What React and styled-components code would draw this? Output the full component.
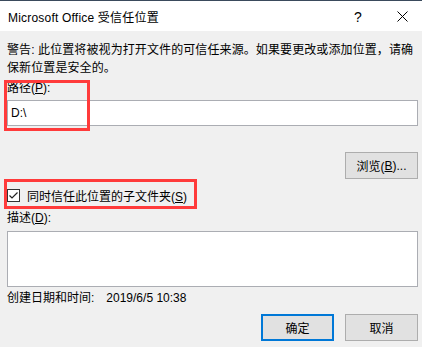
import React from "react";
import styled, {createGlobalStyle} from "styled-components";

const GlobalStyle = createGlobalStyle`
html, body {
    margin: 0;
    padding: 0;
    background: #f0f0f0;
}
body {
    font-family: "Liberation Sans", "Noto Sans CJK SC", sans-serif;
    font-size: 12px;
    color: #000;
}
`;

const Dialog = styled.div`
width: 422px;
height: 347px;
position: relative;
background: #f0f0f0;
overflow: hidden;
`;

const TitleBar = styled.div`
height: 30px;
border-top: 1px solid #3a4a5c;
background: #fff;
display: flex;
align-items: center;
padding-left: 8px;
font-size: 12px;
`;

const TitleText = styled.div`
flex: 1;
padding-top: 1px;
letter-spacing: 0.2px;
`;

const HelpMark = styled.div`
width: 30px;
margin-right: 11px;
text-align: center;
font-size: 14px;
line-height: 14px;
padding-top: 1px;
font-family: "Liberation Sans", sans-serif;
`;

const CloseBox = styled.div`
width: 36px;
display: flex;
justify-content: center;
padding-right: 2px;
`;

const Body = styled.div`
padding: 10px 4px 0 7px;
display: flex;
flex-direction: column;
`;

const Line = styled.div`
line-height: 18px;
white-space: nowrap;
margin-top: ${p => p.$top || 0}px;
letter-spacing: ${p => p.$spread ? "0.1px" : "normal"};
`;

const Key = styled.span`
text-decoration: underline;
text-underline-offset: 1px;
`;

const Field = styled.div`
height: ${p => p.$height}px;
margin-top: ${p => p.$top}px;
background: #fff;
border: 1px solid #abadb3;
box-sizing: border-box;
display: flex;
align-items: center;
padding-left: 3px;
`;

const ButtonRow = styled.div`
display: flex;
justify-content: flex-end;
gap: 11px;
margin-top: ${p => p.$top}px;
`;

const Button = styled.div`
width: 73px;
height: 27px;
box-sizing: border-box;
background: #e1e1e1;
border: ${p => p.$primary ? "2px solid #0078d7" : "1px solid #adadad"};
display: flex;
align-items: center;
justify-content: center;
`;

const CheckRow = styled.div`
display: flex;
align-items: center;
gap: 7px;
height: 18px;
margin-top: 7px;
`;

const DateRow = styled.div`
display: flex;
gap: 12px;
line-height: 18px;
margin-top: 2px;
`;

const Highlight = styled.div`
position: absolute;
left: ${p => p.$x}px;
top: ${p => p.$y}px;
width: ${p => p.$w}px;
height: ${p => p.$h}px;
border: 3px solid #ff3b3b;
box-sizing: border-box;
pointer-events: none;
`;

const App = () => {
    return (
        <Dialog>
            <GlobalStyle/>
            <TitleBar>
                <TitleText>Microsoft Office 受信任位置</TitleText>
                <HelpMark>?</HelpMark>
                <CloseBox>
                    <svg width="11" height="11" viewBox="0 0 11 11">
                        <path d="M0.5 0.5 L10.5 10.5 M10.5 0.5 L0.5 10.5" stroke="#000" strokeWidth="1" fill="none"/>
                    </svg>
                </CloseBox>
            </TitleBar>
            <Body>
                <Line $spread>警告: 此位置将被视为打开文件的可信任来源。如果要更改或添加位置，请确</Line>
                <Line $spread>保新位置是安全的。</Line>
                <Line $top={2}>路径(<Key>P</Key>):</Line>
                <Field $height={26} $top={3}>D:\</Field>
                <ButtonRow $top={26}>
                    <Button>浏览(<Key>B</Key>)...</Button>
                </ButtonRow>
                <CheckRow>
                    <svg width="13" height="13" viewBox="0 0 13 13">
                        <rect x="0.5" y="0.5" width="12" height="12" fill="#fff" stroke="#333"/>
                        <path d="M2.5 6.5 L5 9 L10.5 3.5" stroke="#222" strokeWidth="1.2" fill="none"/>
                    </svg>
                    <span>同时信任此位置的子文件夹(<Key>S</Key>)</span>
                </CheckRow>
                <Line $top={5}>描述(<Key>D</Key>):</Line>
                <Field $height={56} $top={4}/>
                <DateRow>
                    <span>创建日期和时间:</span>
                    <span>2019/6/5 10:38</span>
                </DateRow>
                <ButtonRow $top={7}>
                    <Button $primary>确定</Button>
                    <Button>取消</Button>
                </ButtonRow>
            </Body>
            <Highlight $x={4} $y={80} $w={86} $h={51}/>
            <Highlight $x={4} $y={179} $w={193} $h={30}/>
        </Dialog>
    );
}

export default App;
